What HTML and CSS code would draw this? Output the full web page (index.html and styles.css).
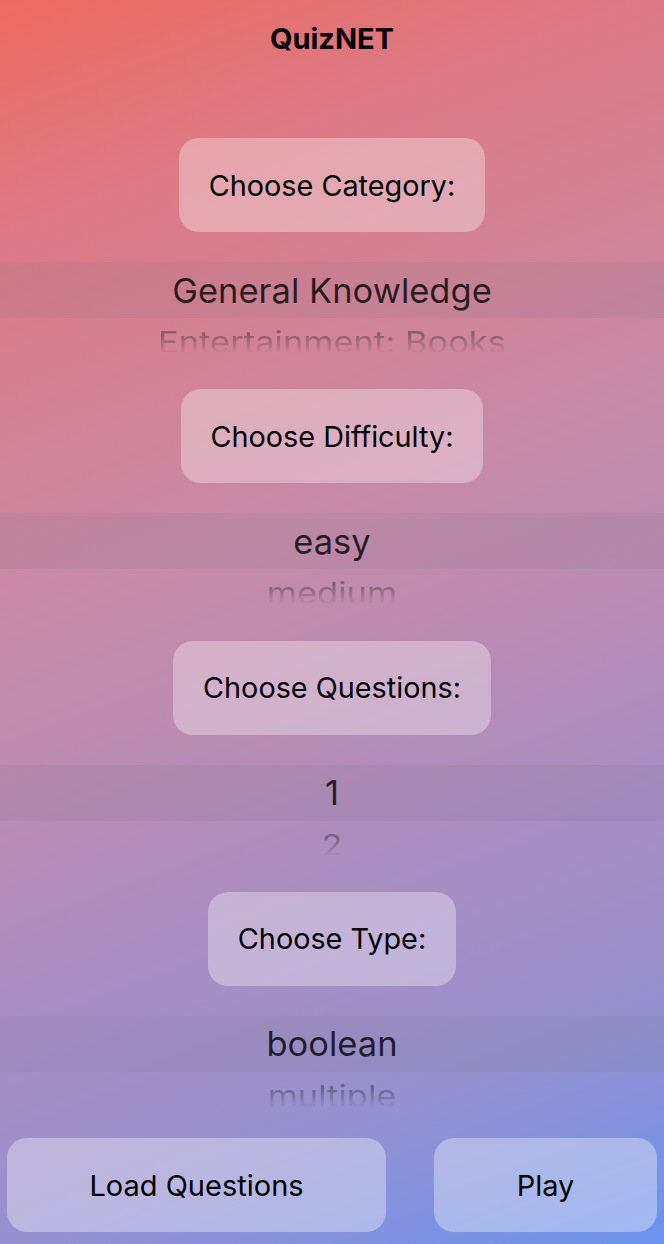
FILE: index.html
```html
<!DOCTYPE html>
<html lang="en">
<head>
<meta charset="utf-8">
<title>QuizNET</title>
<link rel="stylesheet" href="styles.css">
</head>
<body>
<main class="screen">
  <h1 class="title">QuizNET</h1>

  <section class="group">
    <button class="pill">Choose Category:</button>
    <div class="picker">
      <div class="wheel">
        <div class="band">General Knowledge</div>
        <div class="next">Entertainment: Books</div>
      </div>
    </div>
  </section>

  <section class="group">
    <button class="pill">Choose Difficulty:</button>
    <div class="picker">
      <div class="wheel">
        <div class="band">easy</div>
        <div class="next">medium</div>
      </div>
    </div>
  </section>

  <section class="group">
    <button class="pill">Choose Questions:</button>
    <div class="picker">
      <div class="wheel">
        <div class="band">1</div>
        <div class="next">2</div>
      </div>
    </div>
  </section>

  <section class="group group-last">
    <button class="pill">Choose Type:</button>
    <div class="picker">
      <div class="wheel">
        <div class="band">boolean</div>
        <div class="next">multiple</div>
      </div>
    </div>
  </section>

  <footer class="actions">
    <button class="action action-load">Load Questions</button>
    <button class="action action-play">Play</button>
  </footer>
</main>
</body>
</html>
```

FILE: styles.css
```css
html, body {
  margin: 0;
  padding: 0;
}

body {
  width: 664px;
  height: 1244px;
  overflow: hidden;
  font-family: Inter, "Noto Sans", "Liberation Sans", sans-serif;
  background: linear-gradient(160deg, #ee6a5e 0%, #dc7a86 16%, #c88aa6 42%, #9690d0 84%, #6a94ee 100%);
}

.screen {
  display: flex;
  flex-direction: column;
  align-items: center;
  height: 1244px;
}

.title {
  margin: 0;
  height: 138px;
  box-sizing: border-box;
  padding-top: 22px;
  line-height: 34px;
  font-size: 29px;
  font-weight: 700;
  color: #000;
}

.group {
  display: flex;
  flex-direction: column;
  align-items: center;
  width: 100%;
}

.pill {
  height: 94px;
  padding: 0 30px;
  border: 0;
  border-radius: 20px;
  background: rgba(255, 255, 255, 0.33);
  font-family: inherit;
  font-size: 28.8px;
  font-weight: 400;
  color: #000;
}

.picker {
  width: 100%;
  height: 157.33px;
}

.group-last .picker {
  height: 152px;
}

.wheel {
  height: 120px;
  box-sizing: border-box;
  padding-top: 30px;
  overflow: hidden;
}

.band {
  height: 56px;
  display: flex;
  align-items: center;
  justify-content: center;
  background: rgba(118, 118, 128, 0.12);
  font-size: 34.5px;
  color: rgba(0, 0, 0, 0.78);
}

.next {
  height: 50px;
  line-height: 50px;
  text-align: center;
  font-size: 34.5px;
  color: rgba(40, 40, 50, 0.42);
  transform: scaleY(0.86);
  -webkit-mask-image: linear-gradient(to bottom, #000 30%, transparent 75%);
  mask-image: linear-gradient(to bottom, #000 30%, transparent 75%);
}

.actions {
  margin-top: auto;
  width: 100%;
  box-sizing: border-box;
  display: flex;
  justify-content: space-between;
  padding: 0 7px 12px;
}

.action {
  height: 94px;
  border: 0;
  border-radius: 20px;
  background: rgba(255, 255, 255, 0.35);
  font-family: inherit;
  font-size: 29px;
  font-weight: 400;
  color: #000;
}

.action-load {
  width: 379px;
}

.action-play {
  width: 223px;
}
```
